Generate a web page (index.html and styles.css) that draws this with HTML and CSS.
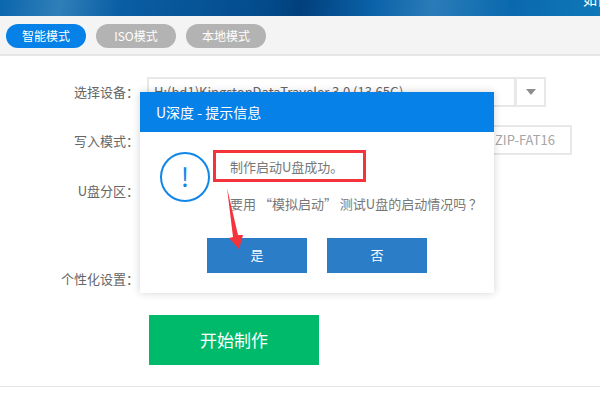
FILE: index.html
```html
<!DOCTYPE html>
<html lang="zh-CN">
<head>
    <meta charset="UTF-8">
    <title>U深度</title>
    <link rel="stylesheet" href="styles.css">
</head>
<body>
    <div class="banner"><span class="banner-text">如何</span></div>

    <div class="tabs">
        <div class="tab active">智能模式</div>
        <div class="tab">ISO模式</div>
        <div class="tab">本地模式</div>
    </div>

    <div class="form">
        <div class="row row-device">
            <div class="label">选择设备：</div>
            <div class="select">H:(hd1)KingstonDataTraveler 3.0 (13.65G)</div>
            <div class="select-arrow"><span class="caret"></span></div>
        </div>
        <div class="row row-mode">
            <div class="label">写入模式：</div>
            <div class="mode-value">ZIP-FAT16</div>
        </div>
        <div class="row row-part">
            <div class="label">U盘分区：</div>
        </div>
        <div class="row row-custom">
            <div class="label">个性化设置：</div>
        </div>
        <div class="start">开始制作</div>
    </div>
    <div class="footer-line"></div>

    <!-- dialog on top of the form -->
    <div class="dialog">
        <div class="dialog-title">U深度 - 提示信息</div>
        <div class="dialog-body">
            <div class="tip-icon">!</div>
            <div class="dialog-text">
                <p class="line-first">制作启动U盘成功。</p>
                <p class="line-second">要用 “模拟启动” 测试U盘的启动情况吗 ？</p>
            </div>
        </div>
        <div class="dialog-btns">
            <div class="btn">是</div>
            <div class="btn">否</div>
        </div>
    </div>

    <!-- red marks drawn over the screenshot -->
    <div class="mark-box"></div>
    <svg class="mark-arrow" width="30" height="70" viewBox="0 0 30 70">
        <polygon points="4,0 15,47 20,47 16,61 6,50 10,49" fill="#f5333a"/>
    </svg>
</body>
</html>
```

FILE: styles.css
```css
* {
    margin: 0;
    padding: 0;
    box-sizing: border-box;
}

body {
    width: 600px;
    height: 400px;
    position: relative;
    overflow: hidden;
    background: #fff;
    color: #666;
    font-family: "Noto Sans CJK SC", "Liberation Sans", sans-serif;
    font-size: 13px;
}

.banner {
    height: 16px;
    position: relative;
    overflow: hidden;
    background: linear-gradient(100deg, #0b66ad 0%, #2f7fb8 10%, #0a5ea4 20%, #034a8a 45%, #023f7c 50%, #0a62a8 62%, #2a7cb8 72%, #0a69ae 85%, #0f78b8 100%);
}

.banner-text {
    position: absolute;
    top: -11px;
    right: -11px;
    color: #fff;
    font-size: 14px;
    line-height: 20px;
}

.tabs {
    height: 40px;
    display: flex;
    gap: 10px;
    padding: 8px 6px 0;
    background: #f4f4f4;
    border-bottom: 2px solid #e6e6e6;
}

.tab {
    width: 80px;
    height: 24px;
    border-radius: 12px;
    background: #b3b3b3;
    color: #fff;
    font-size: 12px;
    line-height: 24px;
    text-align: center;
}

.tab.active {
    background: #0581e8;
}

.form {
    height: 330px;
    padding-top: 21px;
}

.row {
    display: flex;
}

.label {
    width: 139px;
    text-align: right;
    line-height: 29px;
    white-space: nowrap;
}

.row-device {
    height: 30px;
}

.select {
    width: 369px;
    height: 30px;
    margin-left: 8px;
    padding-left: 5px;
    border: 2px solid #e8e8e8;
    line-height: 26px;
    overflow: hidden;
    white-space: nowrap;
}

.select-arrow {
    width: 31px;
    height: 30px;
    margin-left: -1px;
    border: 2px solid #e8e8e8;
    display: flex;
    justify-content: center;
    align-items: center;
}

.caret {
    width: 0;
    height: 0;
    border-left: 5px solid transparent;
    border-right: 5px solid transparent;
    border-top: 6px solid #8e8e8e;
}

.row-mode {
    height: 30px;
    margin-top: 18px;
}

.row-mode .label {
    line-height: 31px;
}

.mode-value {
    width: 425px;
    height: 30px;
    margin-left: 8px;
    padding-left: 346px;
    border: 2px solid #e8e8e8;
    color: #a5a5a5;
    line-height: 26px;
    white-space: nowrap;
}

.row-part {
    margin-top: 21px;
}

.row-custom {
    margin-top: 59px;
}

.start {
    width: 170px;
    height: 50px;
    margin: 22px 0 0 149px;
    background: #00ba6b;
    color: #fff;
    font-size: 17px;
    line-height: 50px;
    text-align: center;
}

.footer-line {
    position: absolute;
    left: 0;
    top: 386px;
    width: 600px;
    height: 1px;
    background: #e6e6e6;
}

.dialog {
    position: absolute;
    left: 140px;
    top: 92px;
    width: 354px;
    height: 201px;
    background: #fff;
    box-shadow: 0 0 8px rgba(0, 0, 0, 0.18);
}

.dialog-title {
    height: 40px;
    padding-left: 16px;
    background: #0581e8;
    color: #fff;
    font-size: 14px;
    line-height: 40px;
}

.dialog-body {
    display: flex;
    height: 106px;
    padding: 20px 0 0 20px;
}

.tip-icon {
    width: 50px;
    height: 50px;
    border: 2px solid #0f86e8;
    border-radius: 50%;
    color: #0f86e8;
    font-size: 26px;
    line-height: 44px;
    text-align: center;
}

.dialog-text {
    margin-left: 20px;
    font-size: 13px;
    color: #777;
}

.line-first {
    line-height: 30px;
}

.line-second {
    margin-top: 7px;
    line-height: 30px;
    white-space: nowrap;
}

.dialog-btns {
    display: flex;
    gap: 20px;
    padding-left: 67px;
}

.btn {
    width: 100px;
    height: 35px;
    background: #2b7dc8;
    color: #fff;
    font-size: 13px;
    line-height: 34px;
    text-align: center;
}

.mark-box {
    position: absolute;
    left: 213px;
    top: 150px;
    width: 153px;
    height: 32px;
    border: 3px solid #f5333a;
}

.mark-arrow {
    position: absolute;
    left: 223px;
    top: 188px;
}
```
